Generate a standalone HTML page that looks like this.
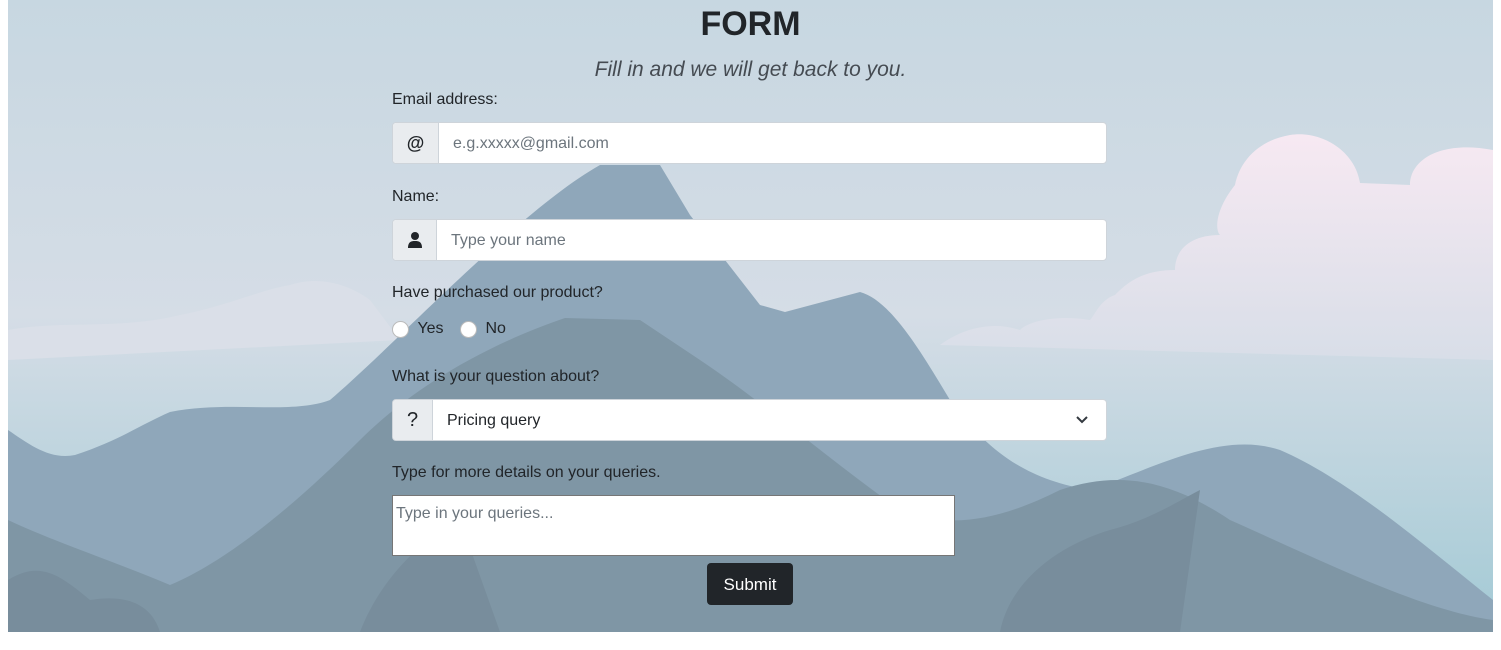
<!DOCTYPE html>
<html><head><meta charset="utf-8"><style>
*{box-sizing:border-box;margin:0;padding:0}
body{width:1501px;height:650px;background:#fff;font-family:"Liberation Sans",sans-serif;color:#212529;position:relative;overflow:hidden}
#bg{position:absolute;left:8px;top:0;width:1485px;height:632px}
h1{position:absolute;left:0;width:1501px;text-align:center;top:5px;font-size:34px;font-weight:bold;color:#212529}
.sub{position:absolute;left:0;width:1501px;text-align:center;top:58px;font-size:21px;font-style:italic;color:#454b52}
.lbl{position:absolute;left:392px;font-size:16px;color:#212529}
.ig{position:absolute;left:392px;width:715px;height:42px;display:flex;border:1px solid #ced4da;border-radius:4px;background:#fff;overflow:hidden}
.ad{background:#e9ecef;border-right:1px solid #ced4da;display:flex;align-items:center;justify-content:center;font-weight:bold;font-size:18px}
.ph{padding-left:14px;display:flex;align-items:center;font-size:16px;color:#6c757d;padding-top:2px}
.radio{display:inline-block;width:17px;height:17px;border-radius:50%;background:#fff;border:1px solid #bbb;vertical-align:middle}
</style></head><body>
<svg id="bg" viewBox="8 0 1485 632" preserveAspectRatio="none">
<defs>
<linearGradient id="sky" x1="0" y1="0" x2="0" y2="1"><stop offset="0" stop-color="#c7d7e1"/><stop offset="0.5" stop-color="#d5dde6"/><stop offset="1" stop-color="#a3cad5"/></linearGradient>
<linearGradient id="cl" x1="0" y1="0" x2="0" y2="1"><stop offset="0" stop-color="#f7e9f2"/><stop offset="1" stop-color="#d8dee8"/></linearGradient>
</defs>
<rect x="8" y="0" width="1485" height="632" fill="url(#sky)"/>
<path d="M1493 150 C1440 140 1410 160 1410 185 L1360 183 C1355 150 1320 130 1290 135 C1260 140 1240 160 1235 185 C1215 210 1215 230 1220 235 C1190 235 1175 250 1175 270 C1140 270 1125 285 1115 295 C1100 300 1095 315 1090 320 C1060 315 1030 320 1020 330 C990 320 960 330 940 345 L1493 360Z" fill="url(#cl)"/>
<path d="M8 330 C60 320 120 330 180 315 C230 305 260 290 290 285 C320 275 350 285 370 300 L400 340 L8 360Z" fill="#dadfe8"/>
<path d="M8 430 C30 445 50 460 75 455 C120 440 140 425 170 412 C230 400 290 415 330 400 C400 340 520 210 600 165 L660 165 L690 215 L760 305 L785 312 L860 292 C890 300 920 350 950 400 C990 455 1030 480 1090 490 C1150 470 1220 430 1280 450 C1350 480 1430 550 1493 600 L1493 632 L8 632Z" fill="#8fa7ba"/>
<path d="M8 520 C50 540 110 560 170 585 C230 560 300 500 360 440 C420 380 500 340 565 318 L640 320 L700 360 C760 400 830 460 900 510 C950 530 1000 520 1060 490 C1120 470 1170 480 1230 520 C1320 560 1420 610 1493 620 L1493 632 L8 632Z" fill="#7f96a5"/>
<path d="M8 580 C40 560 60 575 90 600 C120 595 150 600 160 632 L8 632Z M1000 632 C1010 580 1060 545 1110 530 C1150 520 1180 500 1200 490 L1180 632Z M360 632 C380 580 420 540 460 520 L500 632Z" fill="#788d9c"/>
</svg>
<h1>FORM</h1>
<div class="sub">Fill in and we will get back to you.</div>
<div class="lbl" style="top:91px">Email address:</div>
<div class="ig" style="top:122px"><div class="ad" style="width:46px">@</div><div class="ph">e.g.xxxxx@gmail.com</div></div>
<div class="lbl" style="top:188px">Name:</div>
<div class="ig" style="top:219px"><div class="ad" style="width:44px"><svg width="16" height="18" viewBox="0 0 16 18"><circle cx="8" cy="5" r="4" fill="#212529"/><path d="M1 17 C1 11 4 10 8 10 C12 10 15 11 15 17Z" fill="#212529"/></svg></div><div class="ph">Type your name</div></div>
<div class="lbl" style="top:284px">Have purchased our product?</div>
<div class="lbl" style="top:320px"><span class="radio"></span> <span style="vertical-align:middle;margin-left:4px">Yes</span> <span class="radio" style="margin-left:12px"></span> <span style="vertical-align:middle;margin-left:4px">No</span></div>
<div class="lbl" style="top:368px">What is your question about?</div>
<div class="ig" style="top:399px"><div class="ad" style="width:40px;font-weight:normal;font-size:20px">?</div><div class="ph" style="color:#212529;flex:1">Pricing query</div><svg style="margin:15px 17px 0 0" width="14" height="10" viewBox="0 0 14 10"><path d="M2 2 L7 7 L12 2" stroke="#343a40" stroke-width="2" fill="none"/></svg></div>
<div class="lbl" style="top:464px">Type for more details on your queries.</div>
<div style="position:absolute;left:392px;top:495px;width:563px;height:61px;background:#fff;border:1px solid #767676;font-size:16px;color:#6c757d;padding:9px 3px">Type in your queries...</div>
<div style="position:absolute;left:707px;top:563px;width:86px;height:42px;background:#212529;border-radius:4px;color:#fff;font-size:17px;display:flex;align-items:center;justify-content:center;padding-top:2px">Submit</div>
</body></html>
